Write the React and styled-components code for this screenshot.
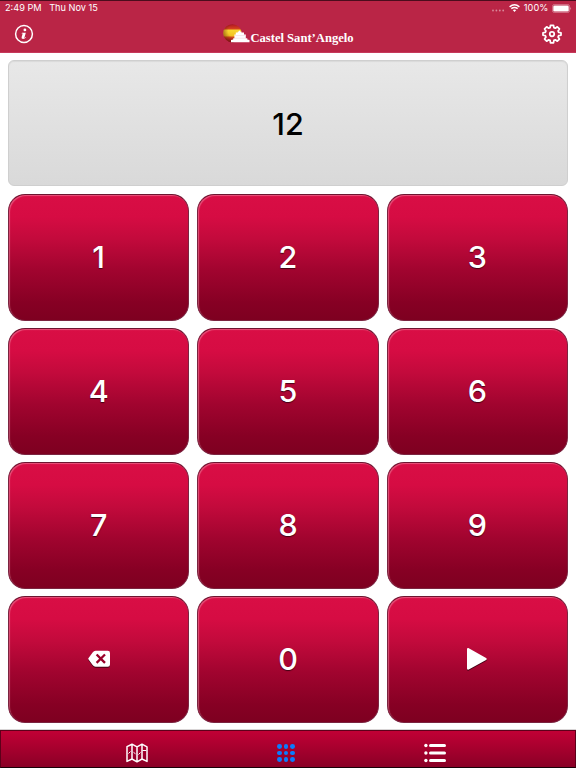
import React, { useState } from 'react';
import styled, { createGlobalStyle, css } from 'styled-components';

const GlobalStyle = createGlobalStyle`
  * {
    box-sizing: border-box;
  }

  body {
    margin: 0;
    background: #fff;
    font-family: Inter, "Liberation Sans", sans-serif;
  }
`

const Screen = styled.div`
  display: flex;
  flex-direction: column;
  width: 100%;
  height: 768px;
  overflow: hidden;
  background: #fff;
`

const Header = styled.header`
  flex: none;
  height: 53px;
  border-top: 1px solid #4b0c1c;
  border-bottom: 1px solid #c6395b;
  background: #ba2546;
  color: #fff;
`

const StatusBar = styled.div`
  display: flex;
  align-items: center;
  justify-content: space-between;
  height: 14px;
  padding: 0 4px 0 5px;
  font-size: 9.2px;
  line-height: 14px;
  white-space: nowrap;
`

const StatusGroup = styled.div`
  display: flex;
  align-items: center;
  gap: ${props => props.gap}px;

  svg {
    display: block;
  }
`

const NavBar = styled.div`
  display: flex;
  align-items: center;
  justify-content: space-between;
  height: 38px;
  padding: 0 14px;
`

const IconButton = styled.button`
  display: block;
  padding: 0;
  border: 0;
  background: none;
  color: #fff;
  cursor: pointer;

  svg {
    display: block;
  }
`

const Brand = styled.div`
  display: flex;
  align-items: center;
  margin-left: 1px;

  svg {
    display: block;
  }
`

const BrandName = styled.span`
  padding-top: 7px;
  font-family: "Liberation Serif", serif;
  font-size: 12.6px;
  font-weight: bold;
  line-height: 14px;
  white-space: nowrap;
`

const Main = styled.main`
  flex: 1;
  display: flex;
  flex-direction: column;
  gap: 8px;
  padding: 7px 8px 7.5px;
`

const Display = styled.div`
  display: flex;
  align-items: center;
  justify-content: center;
  height: 126px;
  border: 1px solid #cfcfcf;
  border-radius: 6px;
  background: linear-gradient(#e8e8e8, #d9d9d9);
  box-shadow: inset 0 1px 1px #dadada;
  color: #000;
  font-size: 30.5px;
  font-weight: 500;
`

const Keypad = styled.div`
  flex: 1;
  display: grid;
  grid-template-columns: repeat(3, 1fr);
  grid-template-rows: repeat(4, 1fr);
  gap: 7.5px 8px;
`

const Key = styled.button`
  display: flex;
  align-items: center;
  justify-content: center;
  padding: 0 0 2px;
  border: 1px solid #7b2440;
  border-top-color: #6d1530;
  border-radius: 17px;
  background: linear-gradient(#d90e45 0%, #d60c43 18%, #c30a3c 35%, #a1042f 60%, #870024 85%, #7d0020 100%);
  background-origin: border-box;
  box-shadow: inset 1px 1px 1px rgba(255, 180, 200, .42);
  color: #fff;
  font-family: inherit;
  font-size: 30.5px;
  font-weight: 500;
  text-shadow: 0 1px 1px rgba(0, 0, 0, .6);
  cursor: pointer;

  svg {
    display: block;
    margin-top: 2px;
    filter: drop-shadow(0 1px .5px rgba(0, 0, 0, .6));
  }
`

const TabBar = styled.nav`
  flex: none;
  display: flex;
  justify-content: center;
  height: 38px;
  padding-right: 4px;
  border: solid #5d001a;
  border-width: 1px;
  border-bottom-color: #1a0008;
  background: linear-gradient(#c10035, #8a0026);
  box-shadow: 0 -1px 0 #d8d4d5;
`

const Tab = styled.button`
  width: 149px;
  padding: 8px 0 0;
  display: flex;
  align-items: center;
  justify-content: center;
  border: 0;
  background: none;
  cursor: pointer;

  ${props => props.$active === true ?
    css`
      color: #087cff;
    ` :
    css`
      color: #fff;
    `
  }
`

const Dots = styled.span`
  display: grid;
  grid-template-columns: repeat(3, 4.8px);
  gap: 1.9px;

  i {
    height: 4.8px;
    border-radius: 50%;
    background: currentColor;
  }
`

const SignalDots = () => (
  <svg width="13" height="9" viewBox="0 0 13 9" fill="#fff" opacity=".45">
    <circle cx="1" cy="6.5" r=".9" />
    <circle cx="4.4" cy="6.5" r=".9" />
    <circle cx="7.8" cy="6.5" r=".9" />
    <circle cx="11.2" cy="6.5" r=".9" />
  </svg>
)

const WifiIcon = () => (
  <svg width="11" height="8" viewBox="0 0 11 8" fill="none" stroke="#fff" strokeWidth="1.5">
    <path d="M.6 2.8Q5.5-1.1 10.4 2.8M2.3 4.7Q5.5 2.2 8.7 4.7" />
    <path d="M3.7 6Q5.5 4.8 7.3 6L5.5 7.9z" fill="#fff" stroke="none" />
  </svg>
)

const BatteryIcon = () => (
  <svg width="20" height="9" viewBox="0 0 20 9">
    <rect x=".4" y=".4" width="17.2" height="8.2" rx="2.2" fill="none" stroke="#fff" strokeOpacity=".5" strokeWidth=".7" />
    <rect x="1.3" y="1.4" width="15.4" height="6.2" rx="1.3" fill="#fff" />
    <path d="M18.4 3q1.5 1.5 0 3z" fill="#fff" opacity=".6" />
  </svg>
)

const InfoIcon = () => (
  <svg width="20" height="20" viewBox="0 0 20 20">
    <circle cx="10" cy="10" r="8.4" fill="none" stroke="#fff" strokeWidth="1.5" />
    <circle cx="10.9" cy="5.9" r="1.4" fill="#fff" />
    <path d="M8 8.7h3.8l-1.5 5.2q.8-.1 1.4-1l.5.4q-1.4 1.8-3.1 1.8-2 0-1.5-1.8l1.1-3.7H7.5z" fill="#fff" />
  </svg>
)

// Eight short teeth around a thin ring
const GearIcon = () => (
  <svg width="20" height="20" viewBox="0 0 24 24" fill="none" stroke="#fff" strokeWidth="2.1" strokeLinejoin="round">
    <path d="M10.2 1.5h3.6l.5 2.8 1.7.7 2.4-1.6 2.5 2.5-1.6 2.4.7 1.7 2.8.5v3l-2.8.5-.7 1.7 1.6 2.4-2.5 2.5-2.4-1.6-1.7.7-.5 2.8h-3.6l-.5-2.8-1.7-.7-2.4 1.6-2.5-2.5 1.6-2.4-.7-1.7-2.8-.5v-3l2.8-.5.7-1.7-1.6-2.4 2.5-2.5 2.4 1.6 1.7-.7z" />
    <circle cx="12" cy="12" r="2.7" />
  </svg>
)

// Striped sun behind the castle outline
const Logo = () => (
  <svg width="27" height="20" viewBox="0 0 27 20">
    <defs>
      <linearGradient id="bands" x1="0" y1="0" x2="0" y2="1">
        <stop offset="0" stopColor="#b01522" />
        <stop offset=".24" stopColor="#d4401f" />
        <stop offset=".34" stopColor="#f8d62f" />
        <stop offset=".62" stopColor="#f3c322" />
        <stop offset=".74" stopColor="#d2401f" />
        <stop offset="1" stopColor="#a01020" />
      </linearGradient>
      <radialGradient id="shade" cx=".6" cy=".38" r=".66">
        <stop offset=".5" stopColor="#4a1000" stopOpacity="0" />
        <stop offset="1" stopColor="#4a1000" stopOpacity=".5" />
      </radialGradient>
    </defs>
    <circle cx="9.4" cy="9.3" r="9.1" fill="url(#bands)" />
    <circle cx="9.4" cy="9.3" r="9.1" fill="url(#shade)" />
    <path d="M8 18.3v-2.4l2.2-.3v-1.3h1.2v-3.7h1.4V8.6h2V7.5h1l.6-1.3.8 1.3h1.2v1.1h2.6v2h1.8v3.7h1.5v1.3l2.2.5v2.2z" fill="#fff" />
    <path d="M12 11.6h10M11.5 14.2h11.7" stroke="#e9b9c4" strokeWidth=".4" />
  </svg>
)

const DeleteIcon = () => (
  <svg width="24" height="18" viewBox="0 0 24 18">
    <path d="M1.4 8.3 5.6 2.5Q6.8.7 8.6.7h12.2q2.2 0 2.2 2.2v11.6q0 2.2-2.2 2.2H8.6q-1.8 0-3-1.8L1.4 9.3q-.4-.5 0-1z" fill="#fff" />
    <path d="M10.4 5.3l6.8 6.8M17.2 5.3l-6.8 6.8" stroke="#990029" strokeWidth="2.3" strokeLinecap="square" />
  </svg>
)

const PlayIcon = () => (
  <svg width="22" height="24" viewBox="0 0 22 24">
    <path d="M2.2 2.2v19.3L19.5 12z" fill="#fff" stroke="#fff" strokeWidth="2.4" strokeLinejoin="round" />
  </svg>
)

const MapIcon = () => (
  <svg width="22" height="20" viewBox="0 0 22 20" fill="none" stroke="currentColor" strokeWidth="1.5" strokeLinejoin="round">
    <path d="M1 3.6 6 1.2l5 2.6 5-2.6 5 2.6v14.6l-5-2.4-5 2.8-5-2.8-5 2.4zM6 1.2V16M11 3.8v15M16 1.2V16" />
    <path d="M2.5 10.5 4.5 8.5M7.5 9.3l2 1.5M12.5 11.5l2-2M16.5 7.5h3.8" strokeWidth="1" />
  </svg>
)

const ListIcon = () => (
  <svg width="22" height="20" viewBox="0 0 22 20" fill="currentColor">
    <circle cx="1.9" cy="2.5" r="1.7" />
    <rect x="5" y=".9" width="17" height="3.2" rx="1.5" />
    <circle cx="1.9" cy="10" r="1.7" />
    <rect x="5" y="8.4" width="17" height="3.2" rx="1.5" />
    <circle cx="1.9" cy="17.5" r="1.7" />
    <rect x="5" y="15.9" width="17" height="3.2" rx="1.5" />
  </svg>
)

const DIGITS = ['1', '2', '3', '4', '5', '6', '7', '8', '9']

function App() {
  const [value, setValue] = useState('12');
  const [tab, setTab] = useState('keypad');

  const press = digit => setValue(value + digit);

  return (
    <Screen>
      <GlobalStyle />
      <Header>
        <StatusBar>
          <StatusGroup gap={7.5}>
            <span>2:49 PM</span>
            <span>Thu Nov 15</span>
          </StatusGroup>
          <StatusGroup gap={3.8}>
            <SignalDots />
            <WifiIcon />
            <span>100%</span>
            <BatteryIcon />
          </StatusGroup>
        </StatusBar>
        <NavBar>
          <IconButton aria-label="Info"><InfoIcon /></IconButton>
          <Brand>
            <Logo />
            <BrandName>Castel Sant’Angelo</BrandName>
          </Brand>
          <IconButton aria-label="Settings"><GearIcon /></IconButton>
        </NavBar>
      </Header>
      <Main>
        <Display>{value}</Display>
        <Keypad>
          {DIGITS.map(digit => (
            <Key key={digit} onClick={() => press(digit)}>{digit}</Key>
          ))}
          <Key aria-label="Delete" onClick={() => setValue(value.slice(0, -1))}><DeleteIcon /></Key>
          <Key onClick={() => press('0')}>0</Key>
          <Key aria-label="Play"><PlayIcon /></Key>
        </Keypad>
      </Main>
      <TabBar>
        <Tab aria-label="Map" $active={tab === 'map'} onClick={() => setTab('map')}><MapIcon /></Tab>
        <Tab aria-label="Keypad" $active={tab === 'keypad'} onClick={() => setTab('keypad')}>
          <Dots>
            {DIGITS.map(digit => <i key={digit} />)}
          </Dots>
        </Tab>
        <Tab aria-label="List" $active={tab === 'list'} onClick={() => setTab('list')}><ListIcon /></Tab>
      </TabBar>
    </Screen>
  );
}
export default App
